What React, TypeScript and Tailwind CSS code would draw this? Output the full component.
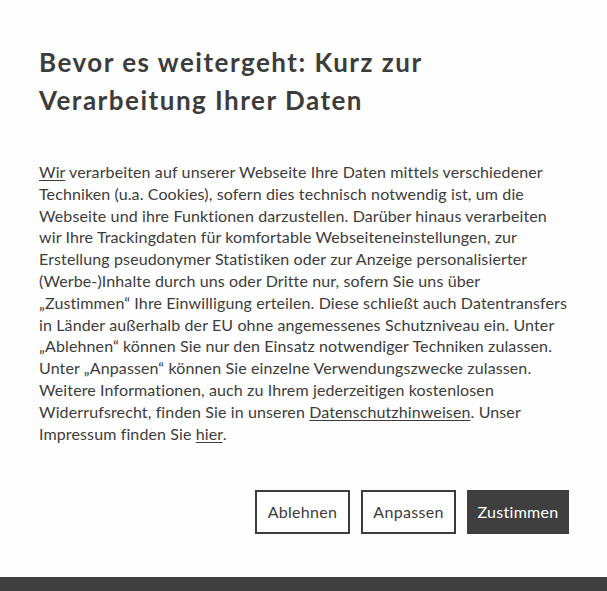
import React from "react";

export default function App() {
  const lines: React.ReactNode[] = [
    <><span className="underline underline-offset-2">Wir</span> verarbeiten auf unserer Webseite Ihre Daten mittels verschiedener</>,
    <>Techniken (u.a. Cookies), sofern dies technisch notwendig ist, um die</>,
    <>Webseite und ihre Funktionen darzustellen. Darüber hinaus verarbeiten</>,
    <>wir Ihre Trackingdaten für komfortable Webseiteneinstellungen, zur</>,
    <>Erstellung pseudonymer Statistiken oder zur Anzeige personalisierter</>,
    <>(Werbe-)Inhalte durch uns oder Dritte nur, sofern Sie uns über</>,
    <>„Zustimmen“ Ihre Einwilligung erteilen. Diese schließt auch Datentransfers</>,
    <>in Länder außerhalb der EU ohne angemessenes Schutzniveau ein. Unter</>,
    <>„Ablehnen“ können Sie nur den Einsatz notwendiger Techniken zulassen.</>,
    <>Unter „Anpassen“ können Sie einzelne Verwendungszwecke zulassen.</>,
    <>Weitere Informationen, auch zu Ihrem jederzeitigen kostenlosen</>,
    <>Widerrufsrecht, finden Sie in unseren <span className="underline underline-offset-2">Datenschutzhinweisen</span>. Unser</>,
    <>Impressum finden Sie <span className="underline underline-offset-2">hier</span>.</>,
  ];
  return (
    <div
      className="w-full h-[591px] bg-[#fefefe] flex flex-col text-[#3c3c3c]"
      style={{ fontFamily: "Lato, 'Open Sans', sans-serif" }}
    >
      <div className="flex-1 px-[39px] pt-[43px]">
        <h1 className="text-[26px] leading-[38px] font-bold tracking-[1.5px]">
          Bevor es weitergeht: Kurz zur
          <br />
          Verarbeitung Ihrer Daten
        </h1>
        <p className="mt-[42px] text-[16px] leading-[21.8px] tracking-[0.12px] whitespace-nowrap">
          {lines.map((l, i) => (
            <React.Fragment key={i}>
              {l}
              {i < lines.length - 1 && <br />}
            </React.Fragment>
          ))}
        </p>
        <div className="mt-[46px] flex justify-end gap-[11px] mr-[-1px]">
          <button className="h-[44px] w-[95px] border-2 border-[#3c3c3c] bg-white text-[16px] tracking-[0.3px]">
            Ablehnen
          </button>
          <button className="h-[44px] w-[95px] border-2 border-[#3c3c3c] bg-white text-[16px] tracking-[0.3px]">
            Anpassen
          </button>
          <button className="h-[44px] w-[102px] bg-[#3f3f3f] text-white text-[16px] tracking-[0.3px]">
            Zustimmen
          </button>
        </div>
      </div>
      <div className="h-[14px] bg-[#404040]" />
    </div>
  );
}
